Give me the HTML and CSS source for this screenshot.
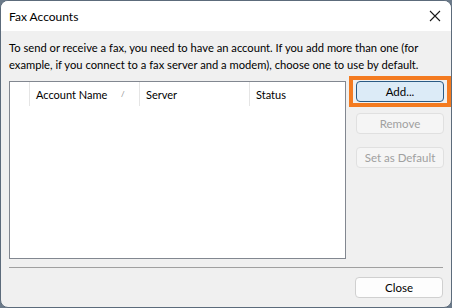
FILE: index.html
```html
<!DOCTYPE html>
<html lang="en">
<head>
    <meta charset="UTF-8">
    <title>Fax Accounts</title>
    <link rel="stylesheet" href="styles.css">
</head>
<body>

    <div class="window">
        <!-- Barra de título -->
        <div class="titlebar">
            <span class="title">Fax Accounts</span>
            <svg class="close-x" width="12" height="12" viewBox="0 0 12 12">
                <path d="M1 1 L11 11 M11 1 L1 11" stroke="#1a1a1a" stroke-width="1.1" fill="none"/>
            </svg>
        </div>

        <div class="content">
            <p class="intro">To send or receive a fax, you need to have an account. If you add more than one (for example, if you connect to a fax server and a modem), choose one to use by default.</p>

            <div class="main">
                <div class="list">
                    <div class="list-header">
                        <div class="col col-icon"></div>
                        <div class="col col-name">Account Name <span class="sort">/</span></div>
                        <div class="col col-server">Server</div>
                        <div class="col col-status">Status</div>
                    </div>
                </div>

                <div class="side">
                    <div class="focus-ring">
                        <button class="btn btn-default">Add...</button>
                    </div>
                    <button class="btn btn-remove" disabled>Remove</button>
                    <button class="btn" disabled>Set as Default</button>
                </div>
            </div>

            <div class="separator"></div>

            <div class="footer">
                <button class="btn">Close</button>
            </div>
        </div>
    </div>

</body>
</html>
```

FILE: styles.css
```css
body {
    margin: 0;
    background-color: #6b7a8a;
    font-family: Lato, "Noto Sans", sans-serif;
    font-size: 11px;
    color: #000;
}

.window {
    width: 450px;
    height: 306px;
    border: 1px solid #5c6b7b;
    border-radius: 8px;
    background-color: #f0f0f0;
    overflow: hidden;
}

.titlebar {
    height: 30px;
    background-color: #fff;
    display: flex;
    align-items: center;
    justify-content: space-between;
    padding: 0 10px 0 8px;
    font-size: 12px;
}

.content {
    padding: 8px 8px 0 8px;
}

.intro {
    margin: 0;
    line-height: 17px;
    font-size: 11.2px;
}

.main {
    display: flex;
    margin-top: 8px;
}

.list {
    width: 336px;
    height: 176px;
    background-color: #fff;
    border: 1px solid #828790;
}

.list-header {
    display: flex;
    height: 24px;
}

.col {
    display: flex;
    align-items: center;
    border-right: 1px solid #e5e5e5;
    padding-left: 6px;
    box-sizing: border-box;
}

.col-icon {
    width: 20px;
}

.col-name {
    width: 110px;
    position: relative;
}

.sort {
    position: absolute;
    left: 91px;
    font-size: 8px;
    color: #888;
}

.col-server {
    width: 110px;
}

.col-status {
    width: 95px;
    border-right: none;
}

.side {
    display: flex;
    flex-direction: column;
    align-items: center;
    width: 104px;
    margin-left: 3px;
    margin-top: -5px;
    gap: 13px;
}

.focus-ring {
    border: 4px solid #f47b20;
    padding: 1px 3px;
}

.btn {
    width: 88px;
    height: 21px;
    font-family: Lato, "Noto Sans", sans-serif;
    font-size: 11.5px;
    background-color: #fdfdfd;
    border: 1px solid #d0d0d0;
    border-radius: 4px;
    color: #000;
    padding: 0;
}

.btn-default {
    background-color: #dcebf7;
    border: 1px solid #2a5a84;
}

.btn-remove {
    margin-top: -7px;
}

.btn:disabled {
    color: #a0a0a0;
    background-color: #f5f5f5;
    border-color: #e0e0e0;
}

.separator {
    border-top: 1px solid #a0a0a0;
    margin-top: 8px;
}

.footer {
    display: flex;
    justify-content: flex-end;
    padding: 9px 0 0 0;
}
```
